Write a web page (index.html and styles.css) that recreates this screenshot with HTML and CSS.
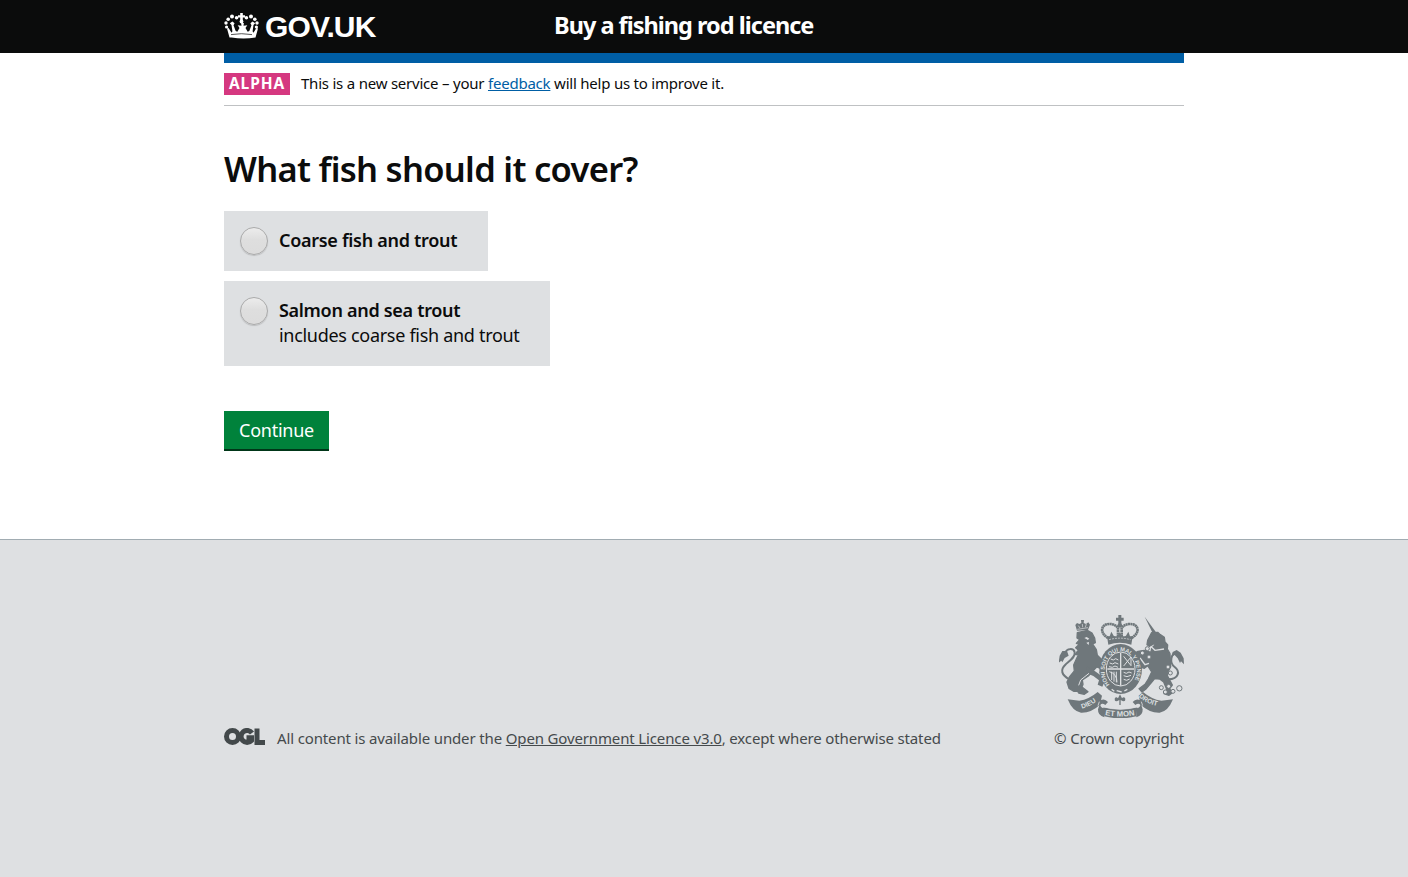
FILE: index.html
```html
<!DOCTYPE html>
<html lang="en">
<head>
<meta charset="utf-8">
<title>Buy a fishing rod licence</title>
<link rel="stylesheet" href="styles.css">
</head>
<body>
<header class="header">
  <div class="wrap header-row">
    <a class="logo" href="#">
      <svg class="crown" viewBox="0 0 35 29" width="35" height="29" fill="#fff">
        <path d="M16.200 2h2.600v2.200H21v2.200h-2.200v2.800h-2.600V6.400H14V4.200h2.200z"/>
        <circle cx="17.500" cy="10.500" r="1.900"/><circle cx="12.600" cy="6.800" r="1.800"/><circle cx="22.400" cy="6.800" r="1.800"/>
        <circle cx="8" cy="5.400" r="2"/><circle cx="27" cy="5.400" r="2"/><circle cx="4.200" cy="8.200" r="1.800"/><circle cx="30.800" cy="8.200" r="1.800"/>
        <circle cx="2" cy="12" r="1.700"/><circle cx="33" cy="12" r="1.700"/><circle cx="2.600" cy="16" r="1.600"/><circle cx="32.400" cy="16" r="1.600"/>
        <path d="M5.500 26.500 3 17.500l1.600-.4 3 4.600.8-1.500-.9-6.200-1.700-1.800 2.600-1.800 2.200 1.800-1.100 2 2.200 5.800 1.600.8 2.200-3.800-1.800-2.700 3.800.4-.4-2.700h2.800l-.4 2.700 3.800-.4-1.800 2.700 2.200 3.800 1.600-.8 2.200-5.800-1.100-2 2.200-1.800 2.600 1.800-1.700 1.800-.9 6.200.8 1.500 3-4.600 1.600.4-2.500 9q-12 2.200-24 0z"/>
        <path d="M7 23.600q10.500-1.800 21 0" fill="none" stroke="#0b0c0c" stroke-width=".7"/>
      </svg>
      <span class="logo-text">GOV.UK</span>
    </a>
    <span class="service">Buy a fishing rod licence</span>
  </div>
</header>
<main class="wrap main">
  <div class="bar"></div>
  <div class="phase">
    <strong class="tag">ALPHA</strong>
    <span class="phase-text">This is a new service – your <a href="#">feedback</a> will help us to improve it.</span>
  </div>
  <h1 class="title">What fish should it cover?</h1>
  <form class="form">
    <label class="option option-one"><span class="radio"></span><span class="label"><b>Coarse fish and trout</b></span></label>
    <label class="option option-two"><span class="radio"></span><span class="label"><b>Salmon and sea trout</b><span class="hint">includes coarse fish and trout</span></span></label>
    <button class="button" type="button">Continue</button>
  </form>
</main>
<footer class="footer">
  <div class="wrap footer-row">
    <div class="licence">
      <svg class="ogl" viewBox="0 0 41 17" width="41" height="17" fill="none" stroke="#43494b" stroke-width="5">
        <circle cx="8.500" cy="8.500" r="6"/>
        <path d="M28 5A6 6 0 1 0 27.500 12.500V9.800H22.500"/>
        <path d="M33 .500V14.500H41"/>
      </svg>
      <span class="licence-text">All content is available under the <a href="#">Open Government Licence v3.0</a>, except where otherwise stated</span>
    </div>
    <div class="copyright">
      <svg class="arms" viewBox="0 0 125 103" width="125" height="103" fill="#6f777b">
        <g transform="translate(-4 -5) scale(.33333)">
          <!-- lion -->
          <path d="M66 62l-5-17 5-6 7 3 6-3-1-9h9l-1 9 7 3 7-5 5 7-6 16z"/>
          <path d="M70 47l5 7m7-12 1 10m11-10-3 10M67 58l32-5" stroke="#dee0e2" stroke-width="2" fill="none"/>
          <path class="beast" d="M67 68l30-7 14 8 8 15 2 14-8 4 11 17 3 17 15 15 10 15-1 7 5 16-9 8-12-9 3-12-13-5-13 14-12 13-18 12 2 13-3 8 18 14-11 8-17-4-4-6-10 1-15-9-6-19 8-16 14-17-2-18 9-20 5-10-9-2 9-13-8-7 11-10-9-3 10-11-8-5z"/>
          <path d="M94 168l22 13 21 15 12 17-7 17-14-6 4-13-17-13-20-8z"/>
          <path d="M44 208c-25-12-29-29-13-44 13-12 31-23 28-37-3-14-24-12-28 1-1 7-5 10-11 11" fill="none" stroke="#6f777b" stroke-width="6"/>
          <path d="M36 123l-14 0-8 14-3 21 8-6 3 5 7-13 12-7z"/>
          <path d="M88 84l7-3 8 5-5 4-4-3zM94 98l8-2-1 9z" fill="#dee0e2"/>
          <path d="M102 190l-25 20-6 16" stroke="#dee0e2" stroke-width="3" fill="none"/>
          <!-- unicorn -->
          <path d="M269 20l34 47-9 4z"/>
          <path class="beast" d="M290 68l18-1 8 7 12 8 2 14 8 9-1 12 8 14 1 22 1 17-8 16-2 11 15 28-8 11 7 13-9 7-15-5 8-13-9-22-12-9-15-1-11 13-16 19-11 8-9-10 18-13 10-16 10-21-12-19-10 8-16-6-10 10-7-8 6-9-9-14 2-15 15-9 19-3 20 6 2-12 14-14-9 1-11 7-8-5 2-13z"/>
          <path d="M287 109l13 12 27-4M255 144l15 20 12-4" stroke="#dee0e2" stroke-width="4" fill="none"/>
          <path d="M340 208c32-2 36-24 19-37-18-14-10-42 6-42 11 0 12 10 11 16" fill="none" stroke="#6f777b" stroke-width="6"/>
          <path d="M349 141l4-15 12-6 12 8 9 17 1 18-9-9-3 5-7-14-9-10z"/>
          <g fill="#dee0e2" stroke="#6f777b" stroke-width="3"><circle cx="277" cy="116" r="6"/><circle cx="262" cy="129" r="6"/><circle cx="282" cy="141" r="6"/><circle cx="339" cy="171" r="6"/><circle cx="346" cy="189" r="6"/><circle cx="319" cy="233" r="6"/><circle cx="341" cy="229" r="6"/><circle cx="331" cy="246" r="6"/><circle cx="354" cy="244" r="6"/><circle cx="373" cy="235" r="8"/></g>
          <!-- royal crown -->
          <path d="M190 15h9v8h7v9h-7v9h-9v-9h-7v-9h7z"/>
          <circle cx="194.500" cy="46" r="7"/>
          <path d="M160 104l-4-25h77l-4 25q-35-12-69 0z"/>
          <path d="M159 84C130 66 140 40 166 42q16 1 23 13v28M230 84c29-18 19-44-7-42q-16 1-23 13v28" fill="none" stroke="#6f777b" stroke-width="8" stroke-dasharray="6 1"/>
          <path d="M162 84l7-19 7 12 8 7 10-17 11 17 8-7 7-12 7 19z"/>
          <path d="M162 89q33-9 65 0" stroke="#dee0e2" stroke-width="2" fill="none" stroke-dasharray="6 3"/>
          <!-- garter and shield -->
          <ellipse cx="197" cy="177" rx="64" ry="75"/>
          <path id="garter" d="M164 224A48 58 0 1 1 230 224" fill="none"/>
          <text class="arms-text garter-text"><textPath href="#garter">HONI SOIT QUI MAL Y PENSE</textPath></text>
          <ellipse cx="197" cy="177" rx="43" ry="51" fill="none" stroke="#dee0e2" stroke-width="3"/>
          <path d="M197 128v99M157 177h80" stroke="#dee0e2" stroke-width="4"/>
          <path d="M167 147l8 3 7-4 8 4m-26 9 9 3 7-4 10 4m-28 8 10 2 8-4 9 4M206 139l22 28v-26l-22 27M163 185q23 6 23 32m-16-32v25m7-25v30m7-30v32M206 187l8 3 8-4 8 3m-24 8 10 3 12-4m-22 12 9 3 9-4" stroke="#dee0e2" stroke-width="3" fill="none"/>
          <path d="M170 238l8 6m7-2 15 4m8-3 9-5" stroke="#dee0e2" stroke-width="4"/>
          <!-- motto ribbon -->
          <path d="M38 268l35 4q29-4 55-26l13 11-3 13q12-5 21 6l-8 9q-10-8-15 0 1 8 12 10v27q-20-5-19-24l4-12q-24 23-55 22-25-3-40-40z"/>
          <path d="M354 268l-35 4q-29-4-55-26l-13 11 3 13q-12-5-21 6l8 9q10-8 15 0-1 8-12 10v27q20-5 19-24l-4-12q24 23 55 22 25-3 40-40z"/>
          <path d="M145 292q51 13 102 0l-3 27q-48 12-96 0z"/>
          <path d="M142 290q53 15 108 0M133 275l-4 12m130-12 4 12" stroke="#dee0e2" stroke-width="2.500" fill="none"/>
          <path d="M193 285v-15q-15 9-14-4 4-8 10-1l6-12 6 12q6-7 10 1 1 13-14 4v15z"/>
          <path id="dieu" d="M81 296Q110 288 140 262" fill="none"/>
          <path id="droit" d="M251 260Q278 285 321 290" fill="none"/>
          <path id="etmon" d="M150 315Q196 324 246 314" fill="none"/>
          <text class="arms-text"><textPath href="#dieu">DIEU</textPath></text>
          <text class="arms-text"><textPath href="#droit">DROIT</textPath></text>
          <text class="arms-text motto"><textPath href="#etmon">ET MON</textPath></text>
        </g>
      </svg>
      <span class="copy-text">© Crown copyright</span>
    </div>
  </div>
</footer>
</body>
</html>
```
FILE: styles.css
```css
* { box-sizing: border-box; }
body {
  margin: 0;
  min-height: 877px;
  display: flex;
  flex-direction: column;
  background: #fff;
  color: #0b0c0c;
  font-family: "Noto Sans", sans-serif;
  font-variant-ligatures: none;
}
.wrap { width: 960px; margin: 0 auto; }
.header { height: 53px; background: #0b0c0c; color: #fff; }
.header-row { height: 53px; display: flex; }
.logo { width: 330px; display: flex; color: #fff; text-decoration: none; white-space: nowrap; }
.crown { margin: 11px 6px 0 0; }
.logo-text { font: bold 30px/53px "Liberation Sans", sans-serif; letter-spacing: -.85px; }
.service { font-size: 23.5px; font-weight: 700; line-height: 51px; letter-spacing: -1px; white-space: nowrap; }
.main { height: 486px; display: flex; flex-direction: column; }
.bar { height: 10px; background: #005ea5; }
.phase { height: 43px; padding-top: 10px; border-bottom: 1px solid #bfc1c3; display: flex; }
.tag { width: 66px; height: 22px; margin-right: 11px; background: #d53880; color: #fff; font-size: 15.5px; font-weight: 700; line-height: 21px; text-align: center; letter-spacing: .9px; }
.phase-text { font-size: 15px; line-height: 20px; letter-spacing: -.22px; white-space: nowrap; }
.phase-text a { color: #005ea5; }
.title { margin: 42px 0 0; font-size: 34.5px; font-weight: 650; line-height: 41px; letter-spacing: -.7px; }
.form { display: flex; flex-direction: column; align-items: flex-start; }
.option { display: flex; padding: 16px 0 0 16px; background: #dee0e2; }
.option-one { width: 264px; height: 60px; margin-top: 22px; }
.option-two { width: 326px; height: 85px; margin-top: 10px; }
.radio { width: 28px; height: 28px; margin-right: 11px; border: 1px solid #aaa; border-radius: 50%; background: linear-gradient(#ececec, #dedede 45%, #dcdcdc); box-shadow: 0 1px 1px rgba(0,0,0,.15); }
.label { display: flex; flex-direction: column; font-size: 18px; line-height: 25px; padding-top: 1px; letter-spacing: -.3px; white-space: nowrap; }
.label b { font-weight: 600; }
.button { width: 105px; height: 40px; margin: 45px 0 0; padding: 0 0 2px; border: 0; background: #00823b; box-shadow: inset 0 -2px 0 #003618; color: #fff; font: 18px/38px "Noto Sans", sans-serif; letter-spacing: -.25px; }
.footer { flex: 1; border-top: 1px solid #a1acb2; background: #dee0e2; color: #454a4c; }
.footer-row { display: flex; justify-content: space-between; padding-top: 75px; }
.licence { display: flex; padding-top: 113px; }
.ogl { margin-right: 12px; }
.licence-text, .copy-text { font-size: 15px; line-height: 20px; letter-spacing: -.14px; white-space: nowrap; }
.licence a { color: #454a4c; }
.copyright { display: flex; flex-direction: column; align-items: flex-end; }
.arms { margin-bottom: 10px; }
.beast { stroke: #6f777b; stroke-width: 4px; stroke-linejoin: round; }
.arms-text { font: bold 20px "Liberation Sans", sans-serif; fill: #dee0e2; }
.garter-text { font-size: 17px; }
.motto { font-size: 23px; }
```
